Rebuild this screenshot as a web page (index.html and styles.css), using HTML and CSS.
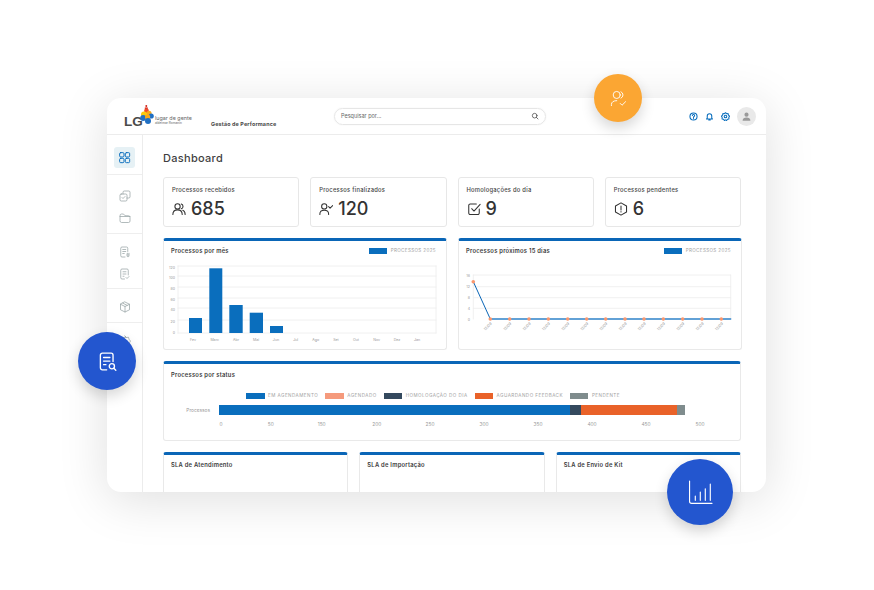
FILE: index.html

```html
<!DOCTYPE html>
<html lang="en">
<head>
  <meta charset="UTF-8">
  <title>Dashboard</title>
  <meta name="viewport" content="width=device-width, initial-scale=1">
  <link rel="stylesheet" href="styles.css">
</head>
<body>
  <div class="stage">
    <div class="window">
      <header class="topbar">
        <div class="logo">
          <span class="logo-lg">LG</span>
          <svg class="logo-mark" viewBox="0 0 14 21">
            <rect x="5.5" y="0" width="1.6" height="2" fill="#d8342a"/>
            <rect x="4.8" y="2.4" width="3" height="1.6" fill="#d8342a"/>
            <circle cx="6.5" cy="6" r="2.4" fill="#ee4b2b"/>
            <circle cx="9" cy="8.4" r="2.6" fill="#f6a81c"/>
            <circle cx="4" cy="9.4" r="3" fill="#f9c80e"/>
            <circle cx="11.2" cy="11" r="2.6" fill="#1f6fc4"/>
            <circle cx="3.2" cy="13" r="3" fill="#1f6fc4"/>
            <circle cx="7.6" cy="12" r="2.6" fill="#f6a81c"/>
            <circle cx="8" cy="16" r="3" fill="#1f6fc4"/>
          </svg>
          <div class="logo-text">
            <span class="logo-name">lugar de gente</span>
            <span class="logo-sub">aldeimar Romanin</span>
          </div>
        </div>
        <div class="product">Gestão de Performance</div>
        <div class="search">
          <span>Pesquisar por...</span>
          <svg viewBox="0 0 24 24"><circle cx="11" cy="11" r="7"/><path d="M16 16l5 5"/></svg>
        </div>
        <div class="top-actions">
          <svg viewBox="0 0 24 24"><circle cx="12" cy="12" r="9.5"/><path d="M9 9.5a3 3 0 1 1 4.5 2.6c-1 .6-1.5 1.2-1.5 2.4M12 17.6v.2"/></svg>
          <svg viewBox="0 0 24 24"><path d="M6 17V10.5a6 6 0 0 1 12 0V17l2 1.5H4zM10 21.5h4"/></svg>
          <svg viewBox="0 0 24 24"><path d="M12 2l3 2.5 4-.2.8 3.9 3 2.8-2 3.4.4 4-3.900 1-2.300 3.300-3-1.700-3 1.700-2.300-3.300-3.900-1 .4-4-2-3.400 3-2.800.8-3.900 4 .2z"/><circle cx="12" cy="12" r="3.500"/></svg>
          <div class="avatar">
            <svg viewBox="0 0 24 24"><circle cx="12" cy="8" r="4.500"/><path d="M3.500 21c0-5 3.500-7 8.500-7s8.500 2 8.500 7z"/></svg>
          </div>
        </div>
      </header>

      <div class="body">
        <nav class="sidebar">
          <div class="side-group first">
            <div class="side-active">
              <svg viewBox="0 0 24 24"><rect x="3" y="3" width="8" height="8" rx="2"/><rect x="13.500" y="3" width="8" height="8" rx="2"/><rect x="3" y="13.500" width="8" height="8" rx="2"/><rect x="13.500" y="13.500" width="8" height="8" rx="2"/></svg>
            </div>
          </div>
          <div class="side-group">
            <svg viewBox="0 0 24 24"><rect x="2" y="8" width="14" height="14" rx="2.500"/><path d="M8 8V4.500A2.500 2.500 0 0 1 10.500 2h9A2.500 2.500 0 0 1 22 4.500v9a2.500 2.500 0 0 1-2.500 2.500H16M6 15l2 2 4-4"/></svg>
            <svg viewBox="0 0 24 24"><path d="M2 7a3 3 0 0 1 3-3h4l3 3.500h7a3 3 0 0 1 3 3V18a3 3 0 0 1-3 3H5a3 3 0 0 1-3-3zM2 9h20"/></svg>
          </div>
          <div class="side-group">
            <svg viewBox="0 0 24 24"><path d="M12 22H6a2.500 2.500 0 0 1-2.500-2.500v-15A2.500 2.500 0 0 1 6 2h9a2.500 2.500 0 0 1 2.500 2.500V11M7.500 7h6M7.500 11h6M7.500 15h3"/><path d="M20 14.500v5a2 2 0 0 1-4 0v-4a1 1 0 0 1 2 0v4"/></svg>
            <svg viewBox="0 0 24 24"><path d="M11 22H6a2.500 2.500 0 0 1-2.500-2.500v-15A2.500 2.500 0 0 1 6 2h10a2.500 2.500 0 0 1 2.500 2.500V14M8 7.500h6M8 12h6M8 16.500h2M14 19l2 2 4-4"/></svg>
          </div>
          <div class="side-group">
            <svg viewBox="0 0 24 24"><path d="M12 2l9 4.500v11L12 22l-9-4.500v-11zM3 6.500L12 11l9-4.500M12 11v11M7.500 4.300l9 4.500"/></svg>
          </div>
          <div class="side-group">
            <svg viewBox="0 0 24 24"><path d="M12 2l3 3 4-.5 1 4 3 3.500-2 3.500.5 4-4 .5-3 3-3-3-4-.5.5-4-2-3.500 3-3.500 1-4 4 .5z"/></svg>
          </div>
        </nav>

        <main class="content">
          <h1>Dashboard</h1>

          <section class="kpis">
            <div class="kpi">
              <div class="kpi-label">Processos recebidos</div>
              <div class="kpi-value">
                <svg viewBox="0 0 24 24"><circle cx="9.500" cy="7.500" r="4.500"/><path d="M1.500 21.500c0-5 3-8 8-8s8 3 8 8M16 3.300a4.500 4.500 0 0 1 0 8.400M18.500 14c2.700 1 4 3.500 4 7.500"/></svg>
                <span>685</span>
              </div>
            </div>
            <div class="kpi">
              <div class="kpi-label">Processos finalizados</div>
              <div class="kpi-value">
                <svg viewBox="0 0 24 24"><circle cx="9" cy="7.500" r="4.500"/><path d="M1.500 21.500v-1c0-4 3-6.500 7.500-6.500s7.500 2.500 7.500 6.500v1M16.500 8l2.500 2.500L23.500 6"/></svg>
                <span>120</span>
              </div>
            </div>
            <div class="kpi">
              <div class="kpi-label">Homologações do dia</div>
              <div class="kpi-value">
                <svg viewBox="0 0 24 24"><path d="M21 12v7a2.500 2.500 0 0 1-2.500 2.500h-13A2.500 2.500 0 0 1 3 19V6a2.500 2.500 0 0 1 2.500-2.500H16M8 11.500l4 4L22.500 4"/></svg>
                <span>9</span>
              </div>
            </div>
            <div class="kpi">
              <div class="kpi-label">Processos pendentes</div>
              <div class="kpi-value">
                <svg viewBox="0 0 24 24"><path d="M12 1.500l9.500 5.300v10.400L12 22.500l-9.500-5.300V6.800zM12 7v6.500M12 16.500v.5"/></svg>
                <span>6</span>
              </div>
            </div>
          </section>

          <section class="charts">
            <div class="panel">
              <div class="panel-head">
                <h2>Processos por mês</h2>
                <div class="legend-item"><i class="swatch blue"></i>PROCESSOS 2025</div>
              </div>
              <svg class="chart" viewBox="0 0 282 90">
                <g class="grid">
                  <path d="M14 8H272M14 18H272M14 29H272M14 40H272M14 50H272M14 62H272M14 75H272M14 8V75M272 8V75"/>
                </g>
                <g class="bars">
                  <rect x="25" y="60" width="13" height="15"/>
                  <rect x="45.300" y="10.300" width="13" height="64.700"/>
                  <rect x="65.300" y="47" width="13.400" height="28"/>
                  <rect x="85.700" y="54.700" width="13.300" height="20.300"/>
                  <rect x="106" y="68" width="13" height="7"/>
                </g>
                <g class="ticks end">
                  <text x="11" y="11">120</text>
                  <text x="11" y="20.500">100</text>
                  <text x="11" y="32">80</text>
                  <text x="11" y="42.500">60</text>
                  <text x="11" y="52.500">40</text>
                  <text x="11" y="64.500">20</text>
                  <text x="11" y="75.500">0</text>
                </g>
                <g class="ticks mid">
                  <text x="29" y="82.500">Fev</text>
                  <text x="50.700" y="82.500">Marc</text>
                  <text x="72" y="82.500">Abr</text>
                  <text x="92" y="82.500">Mai</text>
                  <text x="112" y="82.500">Jun</text>
                  <text x="131.700" y="82.500">Jul</text>
                  <text x="151.700" y="82.500">Ago</text>
                  <text x="172" y="82.500">Set</text>
                  <text x="192" y="82.500">Out</text>
                  <text x="212.700" y="82.500">Nov</text>
                  <text x="233" y="82.500">Dez</text>
                  <text x="253" y="82.500">Jan</text>
                </g>
              </svg>
            </div>

            <div class="panel">
              <div class="panel-head">
                <h2>Processos próximos 15 dias</h2>
                <div class="legend-item"><i class="swatch blue"></i>PROCESSOS 2025</div>
              </div>
              <svg class="chart" viewBox="0 0 282 90">
                <g class="grid">
                  <path d="M14.300 17H271.700M14.300 28.700H271.700M14.300 39.700H271.700M14.300 50.300H271.700M14.300 17V61M271.700 17V61"/>
                </g>
                <path class="line-base" d="M31.300 61H271.700"/>
                <path class="line" d="M14.300 23.700L31.300 61"/>
                <g class="dots">
                  <circle cx="14.300" cy="23.700" r="1.800"/>
                  <circle cx="31.300" cy="61" r="1.800"/>
                  <circle cx="50.700" cy="61" r="1.800"/>
                  <circle cx="70" cy="61" r="1.800"/>
                  <circle cx="89.300" cy="61" r="1.800"/>
                  <circle cx="108.700" cy="61" r="1.800"/>
                  <circle cx="127.700" cy="61" r="1.800"/>
                  <circle cx="146.700" cy="61" r="1.800"/>
                  <circle cx="166" cy="61" r="1.800"/>
                  <circle cx="185" cy="61" r="1.800"/>
                  <circle cx="204.300" cy="61" r="1.800"/>
                  <circle cx="223.700" cy="61" r="1.800"/>
                  <circle cx="243" cy="61" r="1.800"/>
                  <circle cx="262.300" cy="61" r="1.800"/>
                </g>
                <g class="ticks end">
                  <text x="11" y="18.500">16</text>
                  <text x="11" y="29.500">12</text>
                  <text x="11" y="40.500">8</text>
                  <text x="11" y="51.500">4</text>
                  <text x="11" y="62.500">0</text>
                </g>
                <g class="ticks end">
                  <text transform="translate(33 66) rotate(-45)">12/09</text>
                  <text transform="translate(52.700 66) rotate(-45)">12/09</text>
                  <text transform="translate(72 66) rotate(-45)">12/09</text>
                  <text transform="translate(91.300 66) rotate(-45)">12/09</text>
                  <text transform="translate(110.700 66) rotate(-45)">12/09</text>
                  <text transform="translate(129.700 66) rotate(-45)">12/09</text>
                  <text transform="translate(148.700 66) rotate(-45)">12/09</text>
                  <text transform="translate(168 66) rotate(-45)">12/09</text>
                  <text transform="translate(187 66) rotate(-45)">12/09</text>
                  <text transform="translate(206.300 66) rotate(-45)">12/09</text>
                  <text transform="translate(225.700 66) rotate(-45)">12/09</text>
                  <text transform="translate(245 66) rotate(-45)">12/09</text>
                  <text transform="translate(264.300 66) rotate(-45)">12/09</text>
                </g>
              </svg>
            </div>
          </section>

          <section class="panel status">
            <div class="panel-head">
              <h2>Processos por status</h2>
            </div>
            <div class="status-legend">
              <div class="legend-item"><i class="swatch blue"></i>EM AGENDAMENTO</div>
              <div class="legend-item"><i class="swatch salmon"></i>AGENDADO</div>
              <div class="legend-item"><i class="swatch navy"></i>HOMOLOGAÇÃO DO DIA</div>
              <div class="legend-item"><i class="swatch orange"></i>AGUARDANDO FEEDBACK</div>
              <div class="legend-item"><i class="swatch grey"></i>PENDENTE</div>
            </div>
            <div class="status-row">
              <span class="status-name">Processos</span>
              <div class="stack">
                <i class="blue" style="width: 351.400px"></i>
                <i class="navy" style="width: 10.300px"></i>
                <i class="orange" style="width: 96px"></i>
                <i class="grey" style="width: 8px"></i>
              </div>
            </div>
            <svg class="status-axis" viewBox="0 0 576 10">
              <g class="ticks mid">
                <text x="57" y="7">0</text>
                <text x="106.700" y="7">50</text>
                <text x="157.700" y="7">150</text>
                <text x="212.700" y="7">200</text>
                <text x="266" y="7">250</text>
                <text x="320" y="7">300</text>
                <text x="374" y="7">350</text>
                <text x="428" y="7">400</text>
                <text x="482" y="7">450</text>
                <text x="536" y="7">500</text>
              </g>
            </svg>
          </section>

          <section class="slas">
            <div class="panel sla"><div class="panel-head"><h2>SLA de Atendimento</h2></div></div>
            <div class="panel sla"><div class="panel-head"><h2>SLA de Importação</h2></div></div>
            <div class="panel sla"><div class="panel-head"><h2>SLA de Envio de Kit</h2></div></div>
          </section>
        </main>
      </div>
    </div>

    <div class="bubble bubble-orange">
      <svg viewBox="0 0 24 24"><circle cx="9.500" cy="7" r="5"/><path d="M2 22v-1.500c0-3.500 3-5.500 7.500-5.500M15.500 2.500a5 5 0 0 1 0 9M14.500 19l2.500 2.500 5-5"/></svg>
    </div>
    <div class="bubble bubble-doc">
      <svg viewBox="0 0 24 24"><path d="M11 22.500H5.500A2.500 2.500 0 0 1 3 20V4a2.500 2.500 0 0 1 2.500-2.500h11A2.500 2.500 0 0 1 19 4v8M7 7h8M7 11.500h8M7 16h3"/><circle cx="17.500" cy="18" r="3.300"/><path d="M20 20.500l2.500 2.500"/></svg>
    </div>
    <div class="bubble bubble-bars">
      <svg viewBox="0 0 24 24"><path d="M1.500 1v19.500a2 2 0 0 0 2 2h19.500M7 19.500v-4M11.800 19.500v-8M16.600 19.500V8.500M21.400 19.500V4"/></svg>
    </div>
  </div>
</body>
</html>
```

FILE: styles.css

```css
* {
  box-sizing: border-box;
}
body {
  margin: 0;
  background: #fff;
  font-family: Inter, 'Open Sans', sans-serif;
  color: #3f3f3f;
}
svg {
  display: block;
  fill: none;
  stroke: currentColor;
  stroke-width: 1.6;
  stroke-linecap: round;
  stroke-linejoin: round;
}
.stage {
  position: relative;
  width: 874px;
  height: 590px;
  padding: 98px 108px 98px 107px;
  overflow: hidden;
}
.window {
  height: 394px;
  background: #fff;
  border-radius: 14px;
  overflow: hidden;
  box-shadow: 0 8px 50px rgba(0, 0, 0, 0.13);
  display: flex;
  flex-direction: column;
}

/* top bar */
.topbar {
  height: 37px;
  flex: none;
  display: flex;
  align-items: center;
  border-bottom: 1px solid #ececec;
  padding: 0 10px 0 17px;
}
.logo {
  display: flex;
  align-items: center;
  width: 87px;
  flex: none;
}
.logo-lg {
  font-family: 'Liberation Sans', sans-serif;
  font-size: 13.500px;
  font-weight: 700;
  color: #4a4a4a;
  margin-top: 10px;
  width: 16px;
}
.logo-mark {
  width: 14px;
  height: 21px;
  stroke: none;
  margin-top: -1px;
}
.logo-text {
  display: flex;
  flex-direction: column;
  margin: 8px 0 0 1px;
}
.logo-name {
  font-size: 5.400px;
  color: #666;
  white-space: nowrap;
}
.logo-sub {
  font-size: 3.200px;
  color: #666;
  white-space: nowrap;
}
.product {
  font-size: 5.400px;
  font-weight: 700;
  letter-spacing: 0.15px;
  color: #4a4a4a;
  width: 123px;
  flex: none;
  margin-top: 15px;
  white-space: nowrap;
}
.search {
  width: 212px;
  height: 17px;
  flex: none;
  border: 1px solid #e6e6e6;
  border-radius: 9px;
  display: flex;
  align-items: center;
  justify-content: space-between;
  padding: 0 6px;
  font-size: 5.500px;
  color: #666;
  box-shadow: 0 0 2px rgba(0, 0, 0, 0.06);
}
.search svg {
  width: 8px;
  height: 8px;
  color: #444;
  stroke-width: 2.200;
}
.top-actions {
  margin-left: auto;
  display: flex;
  align-items: center;
  color: #0a6ebd;
}
.top-actions > svg {
  width: 9px;
  height: 9px;
  margin-right: 7px;
  stroke-width: 2.800;
}
.avatar {
  width: 19px;
  height: 19px;
  border-radius: 50%;
  background: #e9e9e9;
  display: flex;
  align-items: center;
  justify-content: center;
}
.avatar svg {
  width: 11px;
  height: 11px;
  fill: #9a9a9a;
  stroke: none;
}

/* sidebar */
.body {
  flex: 1;
  display: flex;
  min-height: 0;
}
.sidebar {
  width: 36px;
  flex: none;
  border-right: 1px solid #ececec;
  color: #98a4a6;
}
.side-group {
  display: flex;
  flex-direction: column;
  align-items: center;
  gap: 10px;
  padding: 12px 0 9px;
  border-bottom: 1px solid #eee;
}
.side-group:nth-child(2) {
  padding-top: 15px;
}
.side-group:nth-child(3) {
  padding-bottom: 8px;
}
.side-group:last-child {
  border-bottom: none;
}
.side-group > svg {
  width: 12px;
  height: 12px;
  stroke-width: 1.500;
}
.side-group.first {
  padding: 12px 0 6px;
}
.side-active {
  width: 21px;
  height: 21px;
  background: #e6f1f5;
  border-radius: 3px;
  display: flex;
  align-items: center;
  justify-content: center;
  color: #0a6ebd;
}
.side-active svg {
  width: 13px;
  height: 13px;
  stroke-width: 1.800;
}

/* main column */
.content {
  flex: 1;
  min-width: 0;
  padding: 16px 25px 0 20px;
  display: flex;
  flex-direction: column;
  gap: 11px;
  overflow: hidden;
}
.content > * {
  flex: none;
}
h1 {
  margin: 0 0 1px;
  font-size: 11px;
  line-height: 14px;
  font-weight: 500;
  letter-spacing: 0.3px;
  color: #3f3f3f;
}
.kpis {
  display: grid;
  grid-template-columns: repeat(4, 1fr);
  gap: 11px;
}
.kpi {
  height: 50px;
  border: 1px solid #e7e7e7;
  border-radius: 3px;
  padding: 8px 8px 0;
}
.kpi-label {
  font-size: 5.800px;
  line-height: 8px;
  font-weight: 500;
  letter-spacing: 0.25px;
  color: #444;
}
.kpi-value {
  display: flex;
  align-items: center;
  gap: 5px;
  margin-top: 4px;
  font-size: 18px;
  line-height: 22px;
  font-weight: 500;
  color: #333;
}
.kpi-value svg {
  width: 14px;
  height: 14px;
  stroke-width: 1.800;
}
.charts {
  display: grid;
  grid-template-columns: 1fr 1fr;
  gap: 11px;
}
.panel {
  border: 1px solid #e9e9e9;
  border-top: 3px solid #0a66b7;
  border-radius: 3px;
  background: #fff;
}
.charts .panel {
  height: 112px;
}
.panel-head {
  height: 17px;
  display: flex;
  justify-content: space-between;
  align-items: flex-start;
  padding: 6px 10px 0 7px;
}
h2 {
  margin: 0;
  font-size: 5.800px;
  line-height: 8px;
  font-weight: 600;
  letter-spacing: 0.25px;
  color: #3a3a3a;
}
.legend-item {
  display: flex;
  align-items: center;
  gap: 3.500px;
  font-size: 4.600px;
  letter-spacing: 0.35px;
  line-height: 8px;
  color: #a3a3a3;
  white-space: nowrap;
}
.swatch {
  display: block;
  width: 18.500px;
  height: 6px;
}
.blue { background: #0a6ebd; }
.salmon { background: #f59a7c; }
.navy { background: #34495e; }
.orange { background: #e96229; }
.grey { background: #7f8c8d; }
.chart {
  width: 282px;
  height: 90px;
}
.grid path {
  stroke: #ececec;
  stroke-width: 0.800;
}
.bars rect {
  fill: #0a6ebd;
  stroke: none;
}
.line {
  stroke: #0a66b7;
  stroke-width: 1;
}
.line-base {
  stroke: #2f82c9;
  stroke-width: 1.400;
}
.dots circle {
  fill: #f9976e;
  stroke: none;
}
.ticks text {
  font-size: 3.600px;
  fill: #999;
  stroke: none;
}
.ticks.end text {
  text-anchor: end;
}
.ticks.mid text {
  text-anchor: middle;
}

/* status bar */
.status {
  height: 80px;
}
.status .panel-head {
  padding-top: 7px;
  height: 27px;
}
.status-legend {
  display: flex;
  padding-left: 82px;
  gap: 7px;
  height: 10px;
  align-items: center;
}
.status-legend .legend-item {
  letter-spacing: 0.45px;
}
.status-row {
  display: flex;
  align-items: center;
  height: 10px;
  margin-top: 4px;
}
.status-name {
  width: 46px;
  margin-right: 9px;
  text-align: right;
  font-size: 4.800px;
  color: #999;
}
.stack {
  display: flex;
  height: 10px;
}
.stack i {
  display: block;
  height: 100%;
}
.status-axis {
  width: 576px;
  height: 10px;
  margin-top: 4px;
}
.status-axis .ticks text {
  font-size: 4.800px;
}

/* sla row */
.slas {
  display: grid;
  grid-template-columns: repeat(3, 1fr);
  gap: 11px;
}
.sla {
  height: 70px;
}
.sla .panel-head {
  padding-top: 6px;
}

/* floating badges */
.bubble {
  position: absolute;
  border-radius: 50%;
  display: flex;
  align-items: center;
  justify-content: center;
  color: #fff;
  box-shadow: 0 6px 14px rgba(0, 0, 0, 0.16);
}
.bubble-orange {
  left: 594px;
  top: 74px;
  width: 48px;
  height: 48px;
  background: #fba633;
}
.bubble-orange svg {
  width: 17px;
  height: 17px;
  stroke-width: 1.300;
}
.bubble-doc {
  left: 78px;
  top: 332px;
  width: 58px;
  height: 58px;
  background: #2356cf;
}
.bubble-doc svg {
  width: 19px;
  height: 19px;
  stroke-width: 1.700;
}
.bubble-bars {
  left: 667px;
  top: 459px;
  width: 66px;
  height: 66px;
  background: #2356cf;
}
.bubble-bars svg {
  width: 25px;
  height: 25px;
  stroke-width: 1.100;
}
```
